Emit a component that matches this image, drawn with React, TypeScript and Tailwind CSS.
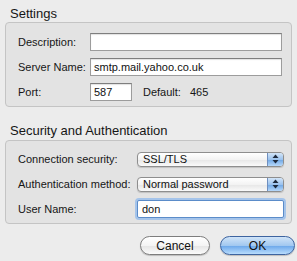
import React from "react";

const font = { fontFamily: '"Liberation Sans", Arial, sans-serif' };

function TextField({ value, width, focused }: { value: string; width: string; focused?: boolean }) {
  return (
    <div
      className={
        focused
          ? `${width} flex h-[18px] items-center rounded-[2px] border border-[#5b8cc9] bg-white pl-[4px] text-[11px] text-[#111] shadow-[0_0_0_2px_#a5c4ea]`
          : `${width} flex h-[18px] items-center border border-[#9c9c9c] border-t-[#7e7e7e] bg-white pl-[3px] text-[11px] text-[#111] shadow-[inset_0_1px_1px_rgba(0,0,0,0.12)]`
      }
    >
      {value}
    </div>
  );
}

function PopUp({ value }: { value: string }) {
  return (
    <div className="flex h-[15px] w-[147px] items-stretch overflow-hidden rounded-[4px] border border-[#8e8e8e] bg-[linear-gradient(to_bottom,#ffffff,#f3f3f3_50%,#e6e6e6_51%,#fafafa)] shadow-[0_1px_1px_rgba(0,0,0,0.15)]">
      <div className="flex flex-1 items-center pl-[5px] text-[11px] leading-none text-[#111]">{value}</div>
      <div className="flex w-[16px] items-center justify-center border-l border-[#6f8fbf] bg-[linear-gradient(to_bottom,#d3e5f8,#9cc3ee_50%,#6ea6e4_51%,#b6d8fa)]">
        <svg width="7" height="10" viewBox="0 0 7 10">
          <path d="M3.5 0.5 L6.5 4 L0.5 4 Z" fill="#1d2a3d" />
          <path d="M3.5 9.5 L6.5 6 L0.5 6 Z" fill="#1d2a3d" />
        </svg>
      </div>
    </div>
  );
}

export default function App() {
  return (
    <div className="flex h-[261px] w-[297px] flex-col bg-[#ececec] pl-[5px] pr-[2px] pt-[5px] text-[#161616]" style={font}>
      <div className="h-[17px] pl-[5px] text-[13px] leading-[17px]">Settings</div>
      <div className="mr-[3px] flex flex-col gap-[7px] rounded-[4px] border border-[#c4c4c4] bg-[#e3e3e3] pb-[5px] pl-[12px] pt-[10px]">
        <div className="flex h-[18px] items-center">
          <span className="w-[72px] text-[11px]">Description:</span>
          <TextField value="" width="w-[192px]" />
        </div>
        <div className="flex h-[18px] items-center">
          <span className="w-[72px] text-[11px]">Server Name:</span>
          <TextField value="smtp.mail.yahoo.co.uk" width="w-[192px]" />
        </div>
        <div className="flex h-[18px] items-center">
          <span className="w-[72px] text-[11px]">Port:</span>
          <TextField value="587" width="w-[42px]" />
          <span className="ml-[11px] text-[11px]">Default:</span>
          <span className="ml-[9px] text-[11px]">465</span>
        </div>
      </div>

      <div className="mt-[16px] h-[16px] pl-[5px] text-[13px] leading-[16px]">Security and Authentication</div>
      <div className="mr-[3px] mt-[1px] flex flex-col gap-[7px] rounded-[4px] border border-[#c4c4c4] bg-[#e3e3e3] pb-[5px] pl-[12px] pt-[9px]">
        <div className="flex h-[18px] items-center">
          <span className="w-[119px] text-[11px]">Connection security:</span>
          <PopUp value="SSL/TLS" />
        </div>
        <div className="flex h-[18px] items-center">
          <span className="w-[119px] text-[11px]">Authentication method:</span>
          <PopUp value="Normal password" />
        </div>
        <div className="flex h-[18px] items-center">
          <span className="w-[119px] text-[11px]">User Name:</span>
          <TextField value="don" width="w-[147px]" focused />
        </div>
      </div>

      <div className="mt-[12px] flex justify-end gap-[10px]">
        <button className="flex h-[19px] w-[70px] items-center justify-center rounded-full border border-[#7d7d7d] bg-[linear-gradient(to_bottom,#ffffff,#f4f4f4_50%,#e4e4e4_51%,#fbfbfb)] text-[12px] text-[#111] shadow-[0_1px_1px_rgba(0,0,0,0.2)]">
          Cancel
        </button>
        <button className="flex h-[19px] w-[75px] items-center justify-center rounded-full border border-[#3d64a0] bg-[linear-gradient(to_bottom,#d0e4f8,#a2c8f0_50%,#6aa6ea_51%,#b8dcfd)] text-[12px] text-[#111] shadow-[0_1px_1px_rgba(0,0,0,0.2)]">
          OK
        </button>
      </div>
    </div>
  );
}
